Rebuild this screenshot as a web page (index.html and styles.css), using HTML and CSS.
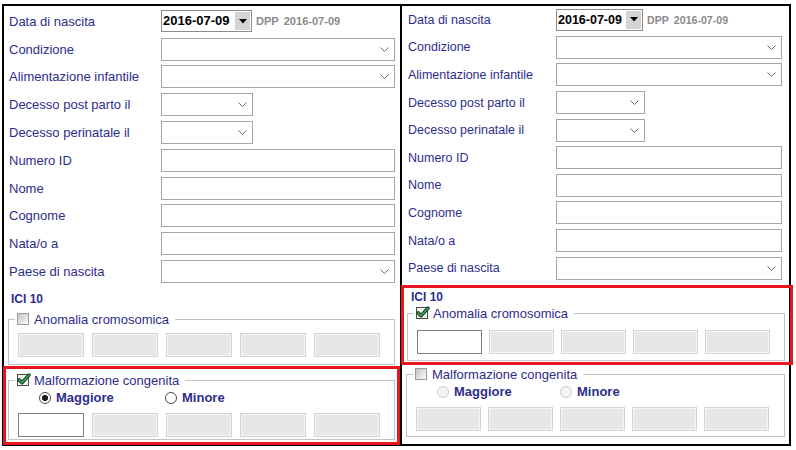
FILE: index.html
```html
<!DOCTYPE html>
<html lang="it">
<head>
    <meta charset="UTF-8">
    <meta name="viewport" content="width=device-width, initial-scale=1.0">
    <title>Dati neonato</title>
    <link rel="stylesheet" href="styles.css">
</head>
<body>
<div class="screens">

    <!-- Scheda con malformazione congenita selezionata -->
    <section class="form-panel form-panel--left">
        <div class="row">
            <span class="row__label">Data di nascita</span>
            <div class="date-line">
                <div class="date-field">
                    <span class="date-field__value">2016-07-09</span>
                    <span class="date-field__btn"><svg width="8" height="5" viewBox="0 0 8 5"><polygon points="0,0 8,0 4,4.5" fill="#000"/></svg></span>
                </div>
                <span class="dpp">DPP</span>
                <span class="dpp dpp__date">2016-07-09</span>
            </div>
        </div>
        <div class="row">
            <span class="row__label">Condizione</span>
            <div class="select"><svg class="chevron" width="9" height="5" viewBox="0 0 9 5"><polyline points="0.5,0.5 4.5,4.5 8.5,0.5" fill="none" stroke="#6b6b6b"/></svg></div>
        </div>
        <div class="row">
            <span class="row__label">Alimentazione infantile</span>
            <div class="select"><svg class="chevron" width="9" height="5" viewBox="0 0 9 5"><polyline points="0.5,0.5 4.5,4.5 8.5,0.5" fill="none" stroke="#6b6b6b"/></svg></div>
        </div>
        <div class="row">
            <span class="row__label">Decesso post parto il</span>
            <div class="select select--short"><svg class="chevron" width="9" height="5" viewBox="0 0 9 5"><polyline points="0.5,0.5 4.5,4.5 8.5,0.5" fill="none" stroke="#6b6b6b"/></svg></div>
        </div>
        <div class="row">
            <span class="row__label">Decesso perinatale il</span>
            <div class="select select--short"><svg class="chevron" width="9" height="5" viewBox="0 0 9 5"><polyline points="0.5,0.5 4.5,4.5 8.5,0.5" fill="none" stroke="#6b6b6b"/></svg></div>
        </div>
        <div class="row">
            <span class="row__label">Numero ID</span>
            <div class="text-input"></div>
        </div>
        <div class="row">
            <span class="row__label">Nome</span>
            <div class="text-input"></div>
        </div>
        <div class="row">
            <span class="row__label">Cognome</span>
            <div class="text-input"></div>
        </div>
        <div class="row">
            <span class="row__label">Nata/o a</span>
            <div class="text-input"></div>
        </div>
        <div class="row">
            <span class="row__label">Paese di nascita</span>
            <div class="select"><svg class="chevron" width="9" height="5" viewBox="0 0 9 5"><polyline points="0.5,0.5 4.5,4.5 8.5,0.5" fill="none" stroke="#6b6b6b"/></svg></div>
        </div>

        <h3 class="section-title">ICI 10</h3>

        <fieldset class="group group--plain">
            <legend class="group__legend"><span class="legend-inner"><span class="checkbox"></span>Anomalia cromosomica</span></legend>
            <div class="cells">
                <span class="cell"></span><span class="cell"></span><span class="cell"></span><span class="cell"></span><span class="cell"></span>
            </div>
        </fieldset>

        <div class="marked">
            <fieldset class="group">
                <legend class="group__legend"><span class="legend-inner"><span class="checkbox checkbox--on"><svg width="14" height="13" viewBox="0 0 14 13"><path d="M2 6.8 5 9.8 12 2" fill="none" stroke="#173a20" stroke-width="3.4" stroke-linecap="round" stroke-linejoin="round"/><path d="M2 6.8 5 9.8 12 2" fill="none" stroke="#38a656" stroke-width="1.6" stroke-linecap="round" stroke-linejoin="round"/></svg></span>Malformazione congenita</span></legend>
                <div class="options">
                    <span class="option"><span class="radio radio--on"></span>Maggiore</span>
                    <span class="option"><span class="radio"></span>Minore</span>
                </div>
                <div class="cells">
                    <span class="cell cell--active"></span><span class="cell"></span><span class="cell"></span><span class="cell"></span><span class="cell"></span>
                </div>
            </fieldset>
        </div>
    </section>

    <!-- Scheda con anomalia cromosomica selezionata -->
    <section class="form-panel form-panel--right">
        <div class="row">
            <span class="row__label">Data di nascita</span>
            <div class="date-line">
                <div class="date-field">
                    <span class="date-field__value">2016-07-09</span>
                    <span class="date-field__btn"><svg width="8" height="5" viewBox="0 0 8 5"><polygon points="0,0 8,0 4,4.5" fill="#000"/></svg></span>
                </div>
                <span class="dpp">DPP</span>
                <span class="dpp dpp__date">2016-07-09</span>
            </div>
        </div>
        <div class="row">
            <span class="row__label">Condizione</span>
            <div class="select"><svg class="chevron" width="9" height="5" viewBox="0 0 9 5"><polyline points="0.5,0.5 4.5,4.5 8.5,0.5" fill="none" stroke="#6b6b6b"/></svg></div>
        </div>
        <div class="row">
            <span class="row__label">Alimentazione infantile</span>
            <div class="select"><svg class="chevron" width="9" height="5" viewBox="0 0 9 5"><polyline points="0.5,0.5 4.5,4.5 8.5,0.5" fill="none" stroke="#6b6b6b"/></svg></div>
        </div>
        <div class="row">
            <span class="row__label">Decesso post parto il</span>
            <div class="select select--short"><svg class="chevron" width="9" height="5" viewBox="0 0 9 5"><polyline points="0.5,0.5 4.5,4.5 8.5,0.5" fill="none" stroke="#6b6b6b"/></svg></div>
        </div>
        <div class="row">
            <span class="row__label">Decesso perinatale il</span>
            <div class="select select--short"><svg class="chevron" width="9" height="5" viewBox="0 0 9 5"><polyline points="0.5,0.5 4.5,4.5 8.5,0.5" fill="none" stroke="#6b6b6b"/></svg></div>
        </div>
        <div class="row">
            <span class="row__label">Numero ID</span>
            <div class="text-input"></div>
        </div>
        <div class="row">
            <span class="row__label">Nome</span>
            <div class="text-input"></div>
        </div>
        <div class="row">
            <span class="row__label">Cognome</span>
            <div class="text-input"></div>
        </div>
        <div class="row">
            <span class="row__label">Nata/o a</span>
            <div class="text-input"></div>
        </div>
        <div class="row">
            <span class="row__label">Paese di nascita</span>
            <div class="select"><svg class="chevron" width="9" height="5" viewBox="0 0 9 5"><polyline points="0.5,0.5 4.5,4.5 8.5,0.5" fill="none" stroke="#6b6b6b"/></svg></div>
        </div>

        <div class="marked">
            <h3 class="section-title">ICI 10</h3>
            <fieldset class="group">
                <legend class="group__legend"><span class="legend-inner"><span class="checkbox checkbox--on"><svg width="14" height="13" viewBox="0 0 14 13"><path d="M2 6.8 5 9.8 12 2" fill="none" stroke="#173a20" stroke-width="3.4" stroke-linecap="round" stroke-linejoin="round"/><path d="M2 6.8 5 9.8 12 2" fill="none" stroke="#38a656" stroke-width="1.6" stroke-linecap="round" stroke-linejoin="round"/></svg></span>Anomalia cromosomica</span></legend>
                <div class="cells">
                    <span class="cell cell--active"></span><span class="cell"></span><span class="cell"></span><span class="cell"></span><span class="cell"></span>
                </div>
            </fieldset>
        </div>

        <fieldset class="group group--plain">
            <legend class="group__legend"><span class="legend-inner"><span class="checkbox"></span>Malformazione congenita</span></legend>
            <div class="options">
                <span class="option"><span class="radio radio--off"></span>Maggiore</span>
                <span class="option"><span class="radio radio--off"></span>Minore</span>
            </div>
            <div class="cells">
                <span class="cell"></span><span class="cell"></span><span class="cell"></span><span class="cell"></span><span class="cell"></span>
            </div>
        </fieldset>
    </section>

</div>
</body>
</html>
```

FILE: styles.css
```css
* {
    box-sizing: border-box;
}
body {
    margin: 0;
    background-color: #fff;
    font-family: "Liberation Sans", Arial, sans-serif;
    font-size: 13px;
    color: #2d2d8c; /* navy used by all the labels */
}
.screens {
    display: flex;
    padding: 4px 0 0 2px;
}

/* Panels */
.form-panel {
    height: 442px;
    border: 2px solid #000;
}
.form-panel--left {
    width: 400px;
    padding: 1.5px 5px 0;
    --label-w: 152px;
    --field-w: 234px;
    --short-w: 92px;
    --date-w: 91px;
    --row-h: 27.8px;
    --row-font: 13px;
    --cell-w: 66px;
    --cell-gap: 8px;
    --opt-w: 126px;
}
.form-panel--right {
    width: 389px;
    border-left: 0; /* shares the left panel's edge */
    padding: 0 7px 0 6px;
    --label-w: 148px;
    --field-w: 226px;
    --short-w: 89px;
    --date-w: 87px;
    --row-h: 27.6px;
    --row-font: 12.5px;
    --cell-w: 65px;
    --cell-gap: 7px;
    --opt-w: 123px;
}

/* Label + field rows */
.row {
    display: grid;
    grid-template-columns: var(--label-w) var(--field-w);
    align-items: center;
    height: var(--row-h);
    font-size: var(--row-font);
}
.row__label {
    white-space: nowrap;
}
.select,
.text-input {
    height: 23px;
    border: 1px solid #a6a6a6;
    background-color: #fff;
}
.select {
    display: flex;
    align-items: center;
    justify-content: flex-end;
    padding-right: 5px;
}
.select--short {
    width: var(--short-w);
}
.chevron {
    display: block;
}

/* Date picker with due date */
.date-line {
    display: flex;
    align-items: center;
}
.date-field {
    display: flex;
    width: var(--date-w);
    height: 22px;
    border: 1px solid #8c8c8c;
}
.date-field__value {
    flex: 1;
    padding-left: 1px;
    line-height: 20px;
    font-weight: bold;
    color: #000;
}
.date-field__btn {
    width: 15px;
    margin: 1px;
    display: flex;
    align-items: center;
    justify-content: center;
    background-color: #d4d4d4;
}
.dpp {
    margin-left: 4px;
    font-size: 0.85em;
    font-weight: bold;
    color: #8a8a8a;
}
.dpp__date {
    margin-left: 5px;
}

/* ICI 10 section */
.section-title {
    margin: 0;
    font-size: 12px;
    font-weight: bold;
}
.form-panel--left .section-title {
    height: 25px;
    padding: 6px 0 0 2px;
    line-height: 16px;
}
.form-panel--right .section-title {
    height: 16px;
    line-height: 16px;
    padding-left: 4px;
}

.group {
    min-width: 0;
    margin: 0;
    padding: 0 0 0 6px;
    border: 1px solid #c3c3c3;
}
.group__legend {
    padding: 0 6px 0 2px;
    height: 15px;
    line-height: 15px;
}
.legend-inner {
    display: flex;
    align-items: center;
    gap: 5px;
}

.checkbox {
    width: 12px;
    height: 12px;
    border: 1px solid #9a9a9a;
    background: linear-gradient(135deg, #c2c2c2, #fbfbfb);
}
.checkbox--on {
    position: relative;
    border-color: #4d4d4d;
    background: #eaf5ec;
}
.checkbox--on svg {
    position: absolute; /* the tick runs past the box edge */
    left: -1px;
    top: -2px;
}

.options {
    display: flex;
    align-items: center;
    height: 18px;
    padding-left: 24px;
    font-weight: bold;
}
.option {
    display: flex;
    align-items: center;
    gap: 5px;
    width: var(--opt-w);
}
.radio {
    width: 12px;
    height: 12px;
    border: 1px solid #4a4a4a;
    border-radius: 50%;
    background-color: #fff;
}
.radio--on {
    background: radial-gradient(circle, #1e1e1e 0 2.8px, #fff 3.3px);
}
.radio--off {
    border-color: #cbcbcb;
    background-color: #f3f3f3;
}

.cells {
    display: flex;
    gap: var(--cell-gap);
    margin-left: 3px;
}
.options + .cells {
    margin-top: 6px;
}
.cell {
    width: var(--cell-w);
    height: 24px;
    border: 1px solid #d3d3d3;
    background-color: #e7e7e7;
    box-shadow: inset 0 0 0 1px #f5f5f5;
}
.cell--active {
    border-color: #7e7e7e;
    background-color: #fff;
    box-shadow: none;
}

/* Red highlight frame around the selected group */
.marked {
    border: 3px solid #e8161e;
}
.form-panel--left .group--plain {
    margin: 1.5px 0 0 -1px;
    padding-top: 6px;
    padding-bottom: 7px;
}
.form-panel--left .marked {
    margin: 1px -5px 0 -6px;
    padding: 4px 2px 2px 3px;
}
.form-panel--left .marked .group {
    margin-left: -1px;
    padding-top: 1px;
    padding-bottom: 2px;
}
.form-panel--right .marked {
    margin: 3px -11px 0 -7px;
    padding: 1px 5px 1px 3px;
}
.form-panel--right .marked .group {
    margin-top: 1px;
    padding-top: 9px;
    padding-bottom: 6px;
}
.form-panel--right .group--plain {
    margin: 2px -3px 0 -2px;
    padding-top: 1px;
    padding-bottom: 5px;
}
```
